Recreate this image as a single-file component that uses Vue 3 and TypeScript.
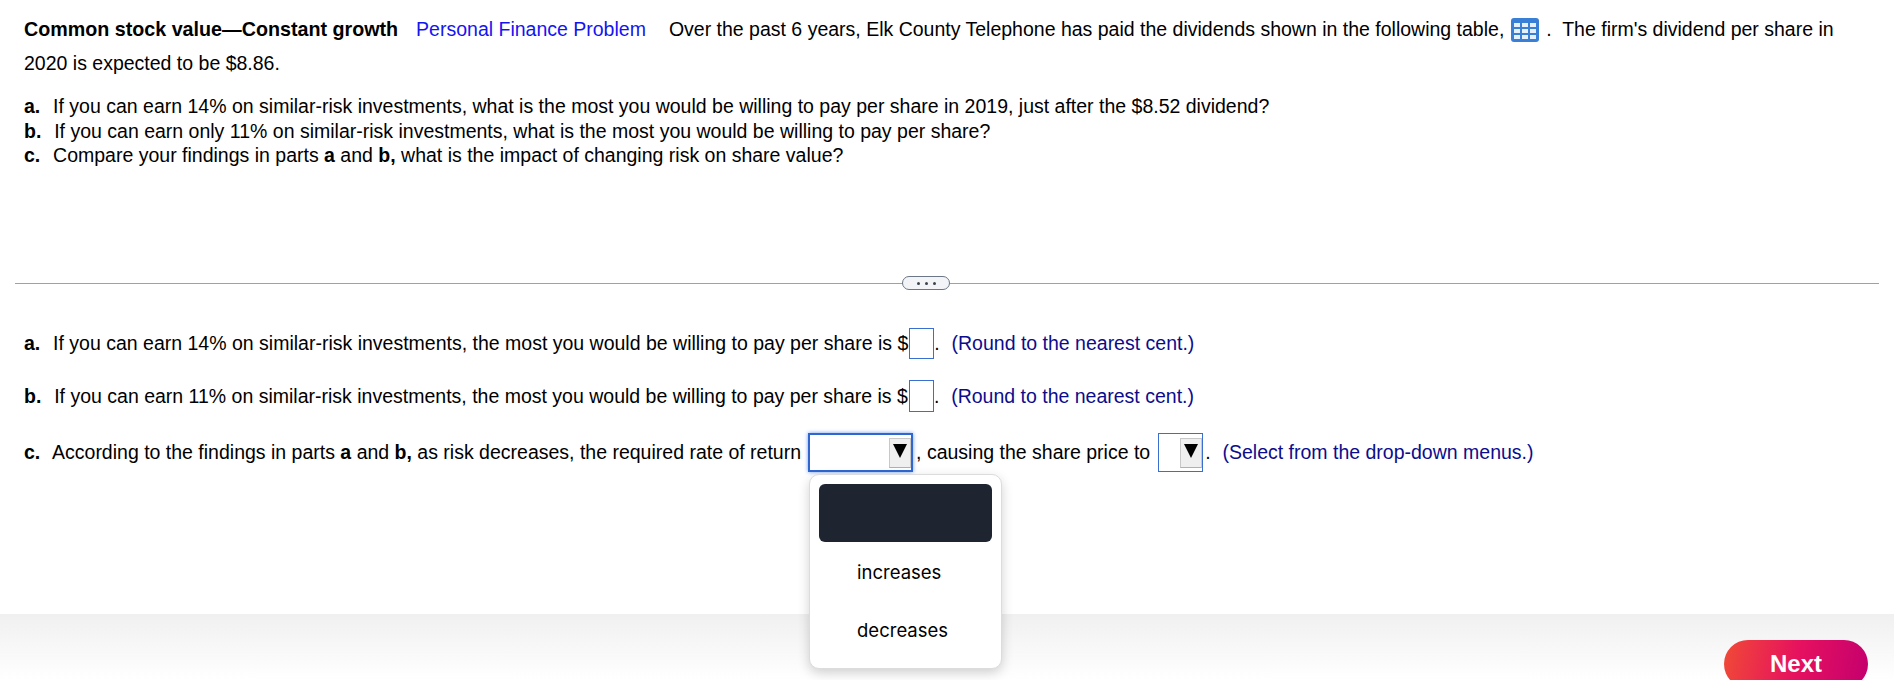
<script setup lang="ts">
const options = ["", "increases", "decreases"];
</script>

<template>
  <div class="page">
    <main class="content">
      <section class="problem">
        <p class="intro">
          <b class="title">Common stock value—Constant growth</b>
          <span class="tag">Personal Finance Problem</span>
          <span>Over the past 6 years, Elk County Telephone has paid the dividends shown in the following table,</span>
          <svg class="grid-icon" width="28" height="24" viewBox="0 0 28 24" aria-hidden="true">
            <rect width="28" height="24" rx="3" fill="#3a7fd6" />
            <g fill="#e6f0fb">
              <rect x="3" y="5" width="6" height="4" />
              <rect x="11" y="5" width="6" height="4" />
              <rect x="19" y="5" width="6" height="4" />
              <rect x="3" y="11" width="6" height="4" />
              <rect x="11" y="11" width="6" height="4" />
              <rect x="19" y="11" width="6" height="4" />
              <rect x="3" y="17" width="6" height="4" />
              <rect x="11" y="17" width="6" height="4" />
              <rect x="19" y="17" width="6" height="4" />
            </g>
          </svg>
          <span class="after-icon">.&nbsp; The firm's dividend per share in</span>
          2020 is expected to be $8.86.
        </p>
        <ol class="questions">
          <li><b class="mark">a.</b>&nbsp; If you can earn 14% on similar-risk investments, what is the most you would be willing to pay per share in 2019, just after the $8.52 dividend?</li>
          <li><b class="mark">b.</b>&nbsp; If you can earn only 11% on similar-risk investments, what is the most you would be willing to pay per share?</li>
          <li><b class="mark">c.</b>&nbsp; Compare your findings in parts <b>a</b> and <b>b,</b> what is the impact of changing risk on share value?</li>
        </ol>
      </section>

      <div class="divider">
        <span class="handle"><i></i><i></i><i></i></span>
      </div>

      <section class="answers">
        <div class="row row-a">
          <span><b class="mark">a.</b>&nbsp; If you can earn 14% on similar-risk investments, the most you would be willing to pay per share is $</span>
          <span class="input"></span>
          <span>.&nbsp;&nbsp;<span class="hint">(Round to the nearest cent.)</span></span>
        </div>
        <div class="row row-b">
          <span><b class="mark">b.</b>&nbsp; If you can earn 11% on similar-risk investments, the most you would be willing to pay per share is $</span>
          <span class="input"></span>
          <span>.&nbsp;&nbsp;<span class="hint">(Round to the nearest cent.)</span></span>
        </div>
        <div class="row row-c">
          <span><b class="mark">c.</b>&nbsp; According to the findings in parts <b>a</b> and <b>b,</b> as risk decreases, the required rate of return</span>
          <span class="select wide focused">
            <span class="arrow"></span>
            <ul class="menu">
              <li v-for="o in options" :key="o" :class="{ active: !o }">{{ o }}</li>
            </ul>
          </span>
          <span class="mid">, causing the share price to</span>
          <span class="select narrow"><span class="arrow"></span></span>
          <span class="tail">.&nbsp;&nbsp;<span class="hint">(Select from the drop-down menus.)</span></span>
        </div>
      </section>
    </main>

    <footer class="footer">
      <button class="next">Next</button>
    </footer>
  </div>
</template>

<style>
body { background: #fff; }
</style>

<style scoped>
.page { height: 680px; overflow: hidden; display: flex; flex-direction: column; font-family: "Liberation Sans", Arial, sans-serif; font-size: 19.5px; color: #000; }
.content { flex: 1; }
.problem { padding: 12px 24px 0; height: 283px; box-sizing: border-box; }
.intro { margin: 0; line-height: 34px; }
.title { font-size: 19.7px; }
.mark { margin-right: 2px; }
.tag { color: #1414f0; margin: 0 23px 0 18px; }
.grid-icon { vertical-align: -6px; margin: 0 7px 0 7px; }
.questions { list-style: none; margin: 14px 0 0; padding: 0; line-height: 24.5px; }
.divider { height: 1px; margin: 0 15px; background: #c48fa6; position: relative; }
.handle { position: absolute; left: 887px; top: -7px; width: 48px; height: 14px; box-sizing: border-box; border: 1.5px solid #6b7686; border-radius: 8px; background: #f2f4f7; display: flex; align-items: center; justify-content: center; gap: 5px; }
.handle i { width: 3px; height: 3px; border-radius: 50%; background: #3c4450; }
.answers { padding: 0 24px; }
.row { display: flex; align-items: center; white-space: pre; }
.row-a { margin-top: 44px; height: 31px; }
.row-b { margin-top: 21px; height: 32px; }
.row-c { margin-top: 21px; height: 39px; }
.hint { color: #0c0c8c; margin-left: 1px; }
.input { display: block; width: 25px; height: 100%; box-sizing: border-box; border: 1px solid #3a6fd0; background: #fff; margin-left: 1px; }
.select { display: block; position: relative; height: 39px; box-sizing: border-box; background: #fff; }
.wide { width: 105px; margin-left: 7px; border: 2px solid #2f66d0; box-shadow: 0 0 4px #6f9bec; }
.narrow { width: 45px; margin-left: 8px; border: 1px solid #3a6fd0; }
.mid { margin-left: 3px; }
.tail { margin-left: 2px; }
.arrow { position: absolute; right: 0; top: 3px; width: 22px; height: 30px; box-sizing: border-box; background: #efefef; border: 1px solid #c8c8c8; border-bottom-color: #b0b0b0; }
.narrow .arrow { top: 4px; }
.arrow::after { content: ""; position: absolute; left: 3px; top: 5px; border-left: 7px solid transparent; border-right: 7px solid transparent; border-top: 14px solid #000; }
.menu { position: absolute; left: -1px; top: 39px; width: 193px; height: 195px; box-sizing: border-box; margin: 0; padding: 9px 9px; list-style: none; background: #fff; border: 1px solid #dcdcdc; border-radius: 10px; box-shadow: 0 4px 12px rgba(0, 0, 0, 0.18); z-index: 2; font-family: Inter, "Liberation Sans", sans-serif; font-size: 18.5px; }
.menu li { height: 58px; line-height: 60px; padding-left: 38px; border-radius: 6px; }
.menu li.active { background: #1e2430; }
.footer { height: 66px; flex: none; background: linear-gradient(#f0f0f0, #fff); display: flex; justify-content: flex-end; padding: 26px 26px 0 0; box-sizing: border-box; overflow: hidden; }
.next { width: 144px; height: 48px; flex: none; border: none; border-radius: 24px; color: #fff; font-family: "Liberation Sans", Arial, sans-serif; font-weight: 700; font-size: 24px; padding: 0; background: linear-gradient(100deg, #f04a36 0%, #e6115f 50%, #c4006e 100%); }
</style>
